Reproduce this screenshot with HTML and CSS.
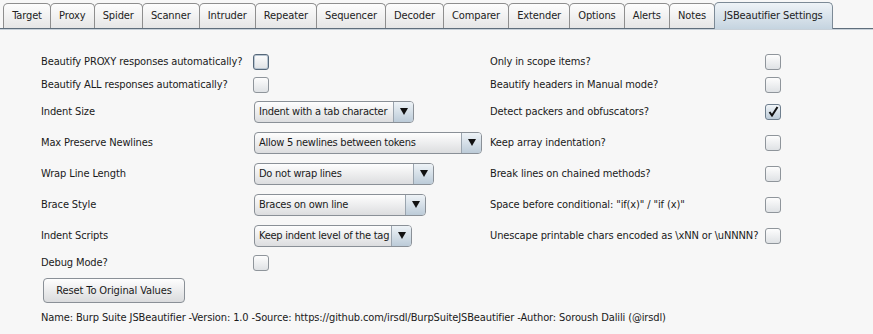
FILE: index.html
```html
<!doctype html>
<html>
<head>
<title>JSBeautifier Settings</title>
<meta charset="utf-8">
<link rel="stylesheet" href="styles.css">
</head>
<body>

<div class="tabs">
	<div class="tab">Target</div>
	<div class="tab">Proxy</div>
	<div class="tab">Spider</div>
	<div class="tab">Scanner</div>
	<div class="tab">Intruder</div>
	<div class="tab">Repeater</div>
	<div class="tab">Sequencer</div>
	<div class="tab">Decoder</div>
	<div class="tab">Comparer</div>
	<div class="tab">Extender</div>
	<div class="tab">Options</div>
	<div class="tab">Alerts</div>
	<div class="tab">Notes</div>
	<div class="tab active">JSBeautifier Settings</div>
</div>

<div class="panel">
	<div class="grid">
		<div class="lbl">Beautify PROXY responses automatically?</div>
		<div class="ctl"><span class="check focus"></span></div>
		<div class="lbl">Only in scope items?</div>
		<div class="ctl"><span class="check"></span></div>

		<div class="lbl">Beautify ALL responses automatically?</div>
		<div class="ctl"><span class="check"></span></div>
		<div class="lbl">Beautify headers in Manual mode?</div>
		<div class="ctl"><span class="check"></span></div>

		<div class="lbl">Indent Size</div>
		<div class="ctl"><div class="combo w160"><span class="val">Indent with a tab character</span><span class="arrow"></span></div></div>
		<div class="lbl">Detect packers and obfuscators?</div>
		<div class="ctl"><span class="check on"><svg width="11" height="11" viewBox="0 0 11 11"><path d="M1.5 6 L4 9.5 L9.5 1" fill="none" stroke="#111" stroke-width="2"/></svg></span></div>

		<div class="lbl">Max Preserve Newlines</div>
		<div class="ctl"><div class="combo w228"><span class="val">Allow 5 newlines between tokens</span><span class="arrow"></span></div></div>
		<div class="lbl">Keep array indentation?</div>
		<div class="ctl"><span class="check"></span></div>

		<div class="lbl">Wrap Line Length</div>
		<div class="ctl"><div class="combo w180"><span class="val">Do not wrap lines</span><span class="arrow"></span></div></div>
		<div class="lbl">Break lines on chained methods?</div>
		<div class="ctl"><span class="check"></span></div>

		<div class="lbl">Brace Style</div>
		<div class="ctl"><div class="combo w172"><span class="val">Braces on own line</span><span class="arrow"></span></div></div>
		<div class="lbl">Space before conditional: "if(x)" / "if (x)"</div>
		<div class="ctl"><span class="check"></span></div>

		<div class="lbl">Indent Scripts</div>
		<div class="ctl"><div class="combo w158"><span class="val">Keep indent level of the tag</span><span class="arrow"></span></div></div>
		<div class="lbl">Unescape printable chars encoded as \xNN or \uNNNN?</div>
		<div class="ctl"><span class="check"></span></div>

		<div class="lbl">Debug Mode?</div>
		<div class="ctl"><span class="check"></span></div>
		<div></div>
		<div></div>
	</div>

	<button class="reset">Reset To Original Values</button>

	<div class="about">Name: Burp Suite JSBeautifier -Version: 1.0 -Source: https://github.com/irsdl/BurpSuiteJSBeautifier -Author: Soroush Dalili (@irsdl)</div>
</div>

</body>
</html>
```

FILE: styles.css
```css
html,body{margin:0;padding:0;}
body{
	width:873px;
	height:334px;
	background:#f7f7f7;
	font:11px "DejaVu Sans Condensed","Liberation Sans",Arial,sans-serif;
	letter-spacing:-0.12px;
	color:#1a1a1a;
	overflow:hidden;
}

/* tab strip */
.tabs{display:flex;align-items:flex-end;padding:3px 0 0 3px;height:25px;border-bottom:1px solid #5f6e7c;box-shadow:0 1px 0 #c8d1d9;}
.tab{height:24px;line-height:24px;padding:0 8px 0 8.2px;border:1px solid #8e8e8e;border-bottom:0;border-radius:5px 5px 0 0;margin-right:-1px;background:linear-gradient(#fdfdfd,#e6e6e6);color:#222;}
.tab.active{height:26px;line-height:26px;margin-bottom:-1px;padding:0 9px;background:linear-gradient(#eef3f7,#c5d4e0);border-color:#7c8a96;position:relative;}

/* settings */
.panel{padding:21px 0 0 41px;}
.grid{display:grid;grid-template-columns:213px 236px 276px 60px;grid-template-rows:23px 23px 31px 31px 31px 31px 31px 23px;}
.lbl,.ctl{display:flex;align-items:center;white-space:nowrap;}

.check{width:14px;height:14px;border:1px solid #8f959b;border-radius:3px;background:linear-gradient(#fdfdfd,#dfe2e5);display:flex;align-items:center;justify-content:center;margin-left:-1px;}
.check.focus{border-color:#56687a;box-shadow:inset 0 0 0 1px #b9c6d2;}
.check.on{background:linear-gradient(#f1f5f8,#bccbd8);border-color:#6f7f8e;}

.combo{border:1px solid #8a9097;border-radius:4px;background:linear-gradient(#fefefe,#dcdddf);display:flex;align-items:stretch;box-sizing:border-box;height:22px;}
.combo .val{flex:1;padding-left:4px;line-height:20px;white-space:nowrap;letter-spacing:-0.25px;}
.combo .arrow{width:19px;border-left:1px solid #9aa4ae;border-radius:0 3px 3px 0;background:linear-gradient(#eef3f7,#bccbd8);display:flex;align-items:center;justify-content:center;}
.combo .arrow:after{content:"";border-left:4px solid transparent;border-right:4px solid transparent;border-top:7px solid #111;}
.w160{width:160px;}
.w228{width:228px;}
.w180{width:180px;}
.w172{width:172px;}
.w158{width:158px;}

.reset{display:block;margin:4px 0 0 2px;width:142px;height:25px;border:1px solid #8a9097;border-radius:4px;background:linear-gradient(#fefefe,#dadbdd);font:inherit;letter-spacing:inherit;color:#1a1a1a;padding:0;}

.about{margin-top:8px;line-height:14px;}
```
